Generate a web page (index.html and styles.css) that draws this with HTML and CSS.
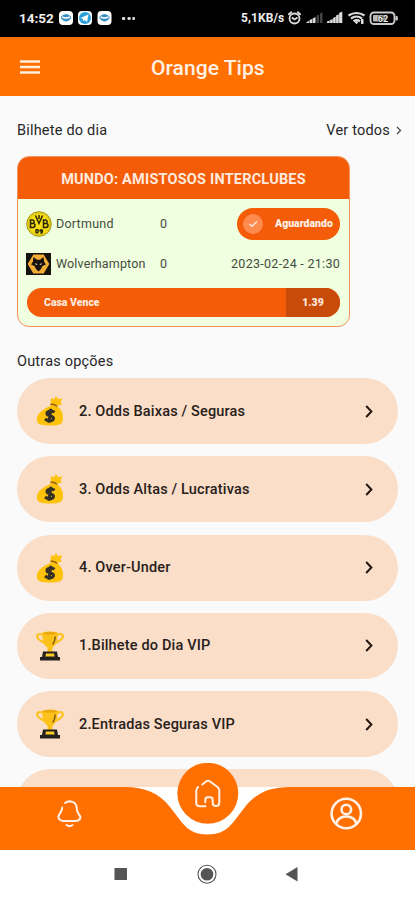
FILE: index.html
```html
<!DOCTYPE html>
<html lang="pt">
<head>
<meta charset="utf-8">
<title>Orange Tips</title>
<link rel="stylesheet" href="styles.css">
</head>
<body>
<svg class="defs" width="0" height="0" aria-hidden="true">
  <symbol id="bag" viewBox="0 0 28 32">
    <path fill="#ffc20a" d="M15 3l3 1.300L20 1l2 3 4.500-.5-2 3.500 1.300 2.500-5 1.500C25 13.500 27.500 19 27 24c-.3 5-3 6.500-13 6.500S1 29 .8 24.500C.7 18 8 13.500 14.500 11z"/>
    <path fill="none" stroke="#94600c" stroke-width="1.600" d="M14.500 9.500q3.500-1 6.500 2"/>
    <path fill="none" stroke="#343026" stroke-width="3" d="M18.500 17.300c-3-2.300-8-1-7.500 1.700.5 2.600 7 1.500 6.500 4.500-.5 2.700-5.500 3-8.500.5M15 13.700l-2.200 14"/>
  </symbol>
  <symbol id="cup" viewBox="0 0 28 30">
    <path fill="none" stroke="#fcc21b" stroke-width="2.200" d="M7 4C2 1.500 0 4.500 2 7.500c1.500 2.300 4 2.600 7 5M21 4c5-2.500 7 .5 5 3.500-1.500 2.300-4 2.600-7 5"/>
    <path fill="#fcc21b" d="M6 2c3-2 13-2 16 0-.3 8-2 12.500-5.500 14.500V21h-5v-4.500C8 14.500 6.300 10 6 2z"/>
    <ellipse cx="14" cy="2.300" rx="7" ry="1.300" fill="#e9a50b"/>
    <path fill="none" stroke="#7c5a10" stroke-width="1.500" d="M19.300 5.500q-.3 5-2.600 8"/>
    <path fill="#25211f" d="M7 20.500h14l1 5.500h2v3.500H4V26h2z"/>
    <path fill="#ffcb28" d="M10 22.500h8l.7 3H9.300z"/>
  </symbol>
  <symbol id="next" viewBox="0 0 8 13"><path fill="none" stroke="#24170f" stroke-width="2" d="M1.200 1l5.200 5.500L1.200 12"/></symbol>
</svg>
<div class="screen">
  <div class="status">
    <span class="clock">14:52</span>
    <svg class="apps" width="76" height="16" viewBox="0 0 76 16">
      <g fill="#fff"><rect x="0" y="1" width="14" height="14" rx="4"/><rect x="19" y="1" width="14" height="14" rx="4"/><rect x="38.500" y="1" width="14" height="14" rx="4"/></g>
      <circle cx="26" cy="8" r="6" fill="#2a9fd8"/><path fill="#fff" d="M21.500 8l8-3.500-1.500 7.500-2.500-2-1.500 1.300V9z"/>
      <g fill="#398fc3"><path d="M2 6.500q5-5 10 0v2q-5 6-10 0z"/><path d="M40.500 6.500q5-5 10 0v2q-5 6-10 0z"/></g>
      <g fill="none" stroke="#fff" stroke-width="1.500"><path d="M3 6.800q4 2.500 8 0M41.500 6.800q4 2.500 8 0"/></g>
      <g fill="#ddd"><rect x="63" y="7" width="3.200" height="3" rx="1"/><rect x="68.500" y="7" width="3.200" height="3" rx="1"/><rect x="73.300" y="7" width="2.700" height="3" rx="1"/></g>
    </svg>
    <span class="speed">5,1KB/s</span>
    <svg class="signals" width="112" height="16" viewBox="0 0 112 16">
      <g fill="none" stroke="#ddd" stroke-width="1.800"><circle cx="6.500" cy="8.500" r="5"/><path d="M.3 4.800l3.500-3M12.700 4.800l-3.500-3M3.800 7.500l2.700 2 3-2"/></g>
      <g fill="#ddd"><path d="M18.500 13v-1l2.500-1V13zM21.500 13v-3l2.700-1V13zM24.700 13V8.500l2.800-1.500V13z"/><path fill="#444" d="M28.500 13V5.500L31 4.500V13zM32 13V3.500L34.500 2V13z"/><path d="M39 13v-1.500l2.700-1V13zM42.100 13v-3l2.600-1V13zM45.100 13V8l2.600-1.200V13zM48.100 13V5.500l2.600-1.200V13zM51.100 13V3l3.200-1.500V13z"/></g>
      <g fill="none" stroke="#ddd" stroke-width="2.200"><path d="M60.500 5.500q8-5 16 0M63 8.500q5.500-4 11 0M65.500 11.300q3.200-2.300 6.500 0"/></g><path fill="#ddd" d="M66.500 12l2-1.300 2 1.300-2 2.300zM73 9h2.500v5H73z"/>
      <rect x="82.500" y="2.500" width="24" height="11.500" rx="3.500" fill="none" stroke="#ccc" stroke-width="1.900"/><rect x="85" y="5" width="13" height="6.500" rx="1" fill="#bbb"/><rect x="107.500" y="6" width="2.300" height="4.500" rx="1" fill="#ccc"/>
      <text class="charge" x="95" y="11.500" text-anchor="middle">62</text>
    </svg>
  </div>
  <header class="appbar">
    <svg width="20" height="14" viewBox="0 0 20 14"><path fill="none" stroke="#ffeddd" stroke-width="2.600" d="M0 1.500h20M0 7h20M0 12.500h20"/></svg>
    <h1>Orange Tips</h1>
  </header>
  <main>
    <div class="heading">
      <span class="day">Bilhete do dia</span>
      <span class="all">Ver todos</span>
      <svg width="6" height="9" viewBox="0 0 6 9"><path fill="none" stroke="#444" stroke-width="1.200" d="M1 1l3.500 3.500L1 8"/></svg>
    </div>
    <section class="ticket">
      <h2><span>MUNDO: AMISTOSOS INTERCLUBES</span></h2>
      <div class="match">
        <svg width="26" height="26" viewBox="0 0 26 26"><circle cx="13" cy="13" r="12.300" fill="#f7df14" stroke="#9c8d21"/><circle cx="13" cy="13" r="10.700" fill="none" stroke="#b7a51c" stroke-width=".5"/><g fill="none" stroke="#282409" stroke-width="1.500"><path d="M4.500 9v7.500h2.500q2-.3 2-2.300T6.500 12.500h-2H6.500q1.700-.2 1.700-1.800T6.500 9zM17.500 9v7.500H20q2-.3 2-2.300t-2.500-1.700h-2h2q1.700-.2 1.700-1.800T19.500 9zM9.500 4.500l3.500 8 3.500-8M13 4v4"/><ellipse cx="11" cy="20.300" rx="1.200" ry="1.700"/><path d="M16.500 19q-3-.5-2.300 1 2.500 0 2.200-1v1.200q0 1.800-2 1.800"/></g></svg>
        <span class="team dortmund">Dortmund</span><span class="goals">0</span>
        <div class="state"><svg width="20" height="20" viewBox="0 0 20 20"><circle cx="10" cy="10" r="10" fill="#ff8a50"/><path fill="none" stroke="#ffe9dc" stroke-width="1.400" d="M6.500 10l2.500 2.300L14 7.500"/></svg><span>Aguardando</span></div>
      </div>
      <div class="match second">
        <svg width="25" height="22" viewBox="0 0 25 22"><path fill="#16120d" d="M0 0h25v22H0z"/><path fill="#f2ae35" d="M7.300 1.500h10.400L23.300 11l-5.600 9.500H7.300L1.700 11z"/><path fill="#17120e" d="M7.500 4l3.500 2.700h3L17.500 4l.7 5 1.800 2.500-3.500 1.500-1.500 3-2.500 2.500-2.500-2.500-1.500-3L5 11.500 6.800 9z"/><path fill="#f5e5c3" d="M9 10l2.700 1.300L10 12zM16 10l-2.700 1.300L15 12z"/></svg>
        <span class="team wolves">Wolverhampton</span><span class="goals">0</span><span class="date">2023-02-24 - 21:30</span>
      </div>
      <div class="bet"><span class="pick">Casa Vence</span><span class="odd">1.39</span></div>
    </section>
    <div class="other"><span>Outras opções</span></div>
    <div class="list">
      <div class="option"><svg class="bag"><use href="#bag"/></svg><span>2. Odds Baixas / Seguras</span><svg class="next"><use href="#next"/></svg></div>
      <div class="option"><svg class="bag"><use href="#bag"/></svg><span>3. Odds Altas / Lucrativas</span><svg class="next"><use href="#next"/></svg></div>
      <div class="option"><svg class="bag"><use href="#bag"/></svg><span>4. Over-Under</span><svg class="next"><use href="#next"/></svg></div>
      <div class="option"><svg class="cup"><use href="#cup"/></svg><span>1.Bilhete do Dia VIP</span><svg class="next"><use href="#next"/></svg></div>
      <div class="option"><svg class="cup"><use href="#cup"/></svg><span>2.Entradas Seguras VIP</span><svg class="next"><use href="#next"/></svg></div>
      <div class="option"></div>
    </div>
  </main>
  <nav>
    <svg width="415" height="87" viewBox="0 763 415 87">
      <path fill="#fff" d="M0 787h415v63H0z"/>
      <path fill="#ff7000" d="M0 787h125c20 0 34 6 45 20 13 16 17 27.500 37.500 27.500S232 823 245 807c11-14 25-20 45-20h125v63H0z"/>
      <circle cx="207.800" cy="793.300" r="30.500" fill="#ff7000"/>
      <g fill="none" stroke="#fff1e7" stroke-width="2" stroke-linecap="round" stroke-linejoin="round">
        <path d="M202.300 784.500l3.700-3q2-1.500 4 0l7.500 5.500q1.800 1.500 1.800 3.700v11.800q0 3.500-3.300 3.500t-3.300-3V800q0-2.700-2.500-2.700h-2.400q-2.500 0-2.500 2.500v2.500M205.500 806.300H200q-3.700 0-3.700-3.500v-12q0-2.200 1.800-3.700"/>
        <path d="M65 803c4.500-3.300 11.500-1.200 11.700 5 .1 3 .6 4.500 2.300 6.500 3.200 3.700.2 6.500-3.500 6.500H63c-3.700 0-6-3.500-3.500-6.800 1.800-2.300 2.700-4 2.700-6.700M66.500 825q3 2.300 6 0"/>
      </g>
      <g fill="none" stroke="#fff1e7" stroke-width="2.600"><circle cx="346.300" cy="813.500" r="14.700"/><circle cx="346.300" cy="809.500" r="4.800"/><path d="M336 824q2-7.500 10.300-7.500t10.300 7.500"/></g>
    </svg>
  </nav>
  <footer>
    <svg width="415" height="50" viewBox="0 850 415 50"><path fill="#555" d="M114.500 868h12.500v12h-12.500zM285.500 874.300l12-7.300v14.500z"/><circle cx="207" cy="874.300" r="6.300" fill="#555"/><circle cx="207" cy="874.300" r="9" fill="none" stroke="#555" stroke-width="1.100"/></svg>
  </footer>
</div>
</body>
</html>
```
FILE: styles.css
```css
* { box-sizing: border-box; }
body { margin: 0; font-family: Roboto, "Liberation Sans", sans-serif; color: #272727; }
h1, h2 { margin: 0; }
svg { display: block; flex: none; }
span { white-space: nowrap; }
.defs { position: absolute; }
.screen { width: 415px; height: 900px; overflow: hidden; background: #fafafa; display: flex; flex-direction: column; }
.status { height: 37px; flex: none; background: #000; color: #eee; display: flex; align-items: center; padding: 0 19px 2px; }
.clock { font-size: 13.5px; font-weight: 700; width: 40px; }
.speed { margin-left: 106px; width: 47px; font-size: 12px; font-weight: 700; letter-spacing: .1px; }
.clock, .speed, .apps, .signals { flex: none; }
.charge { font: 700 9px Roboto, sans-serif; fill: #eee; stroke: #000; stroke-width: 1px; paint-order: stroke; }
.appbar { height: 59px; flex: none; background: #ff7000; display: flex; align-items: center; padding-left: 20px; }
.appbar svg { margin-top: 1px; }
.appbar h1 { margin-left: 111px; color: #fff1e5; font-size: 21px; font-weight: 500; letter-spacing: .05px; padding-top: 3px; }
main { height: 691px; flex: none; padding: 0 17px; overflow: hidden; }
.heading { height: 60px; padding-top: 9px; display: flex; align-items: center; font-size: 14.5px; letter-spacing: .2px; }
.day { flex: 1; }
.heading svg { margin: 0 -4px 0 6px; }
.ticket { width: 333px; height: 171px; border: 1px solid #f1935d; border-radius: 12px; background: #efffdf; overflow: hidden; }
.ticket h2 { height: 42px; display: flex; align-items: center; justify-content: center; padding-top: 2px; background: #f45c08; color: #ffeade; font-size: 14.5px; font-weight: 700; letter-spacing: .2px; }
.match { display: flex; align-items: center; height: 49px; padding: 0 9px 0 8px; font-size: 12.5px; letter-spacing: .15px; color: #454b3e; }
.match.second { height: 32px; }
.dortmund { letter-spacing: .25px; }
.team { width: 104px; margin-left: 4px; }
.second .team { margin-left: 5px; }
.second span { position: relative; top: -1px; }
.goals { flex: 1; }
.date { letter-spacing: .28px; }
.state { width: 103px; height: 32px; border-radius: 16px; background: #f45c08; display: flex; align-items: center; padding-left: 6px; }
.state span { margin-left: 12px; color: #fff0e7; font-size: 10.5px; font-weight: 900; letter-spacing: 0; }
.bet { height: 29px; margin: 8px 9px 0; border-radius: 15px; overflow: hidden; background: #f45c08; color: #ffeade; display: flex; align-items: center; font-size: 10.5px; font-weight: 900; }
.pick { flex: 1; padding-left: 17px; }
.odd { width: 54px; height: 29px; line-height: 29px; text-align: center; background: #c94b0a; }
.other { height: 51px; display: flex; align-items: center; padding-top: 17px; font-size: 14.5px; letter-spacing: .2px; }
.list { display: flex; flex-direction: column; gap: 12.3px; }
.option { height: 66px; flex: none; width: 381px; border-radius: 33px; background: #fadec8; display: flex; align-items: center; padding: 0 25px 0 19px; }
.option span { flex: 1; margin-left: 15px; font-size: 14.5px; font-weight: 500; letter-spacing: .16px; color: #28201a; }
.bag { width: 28px; height: 32px; }
.cup { width: 28px; height: 30px; }
.next { width: 8px; height: 13px; }
nav { position: relative; margin-top: -24px; height: 87px; flex: none; }
footer { height: 50px; background: #fff; flex: none; }
```
